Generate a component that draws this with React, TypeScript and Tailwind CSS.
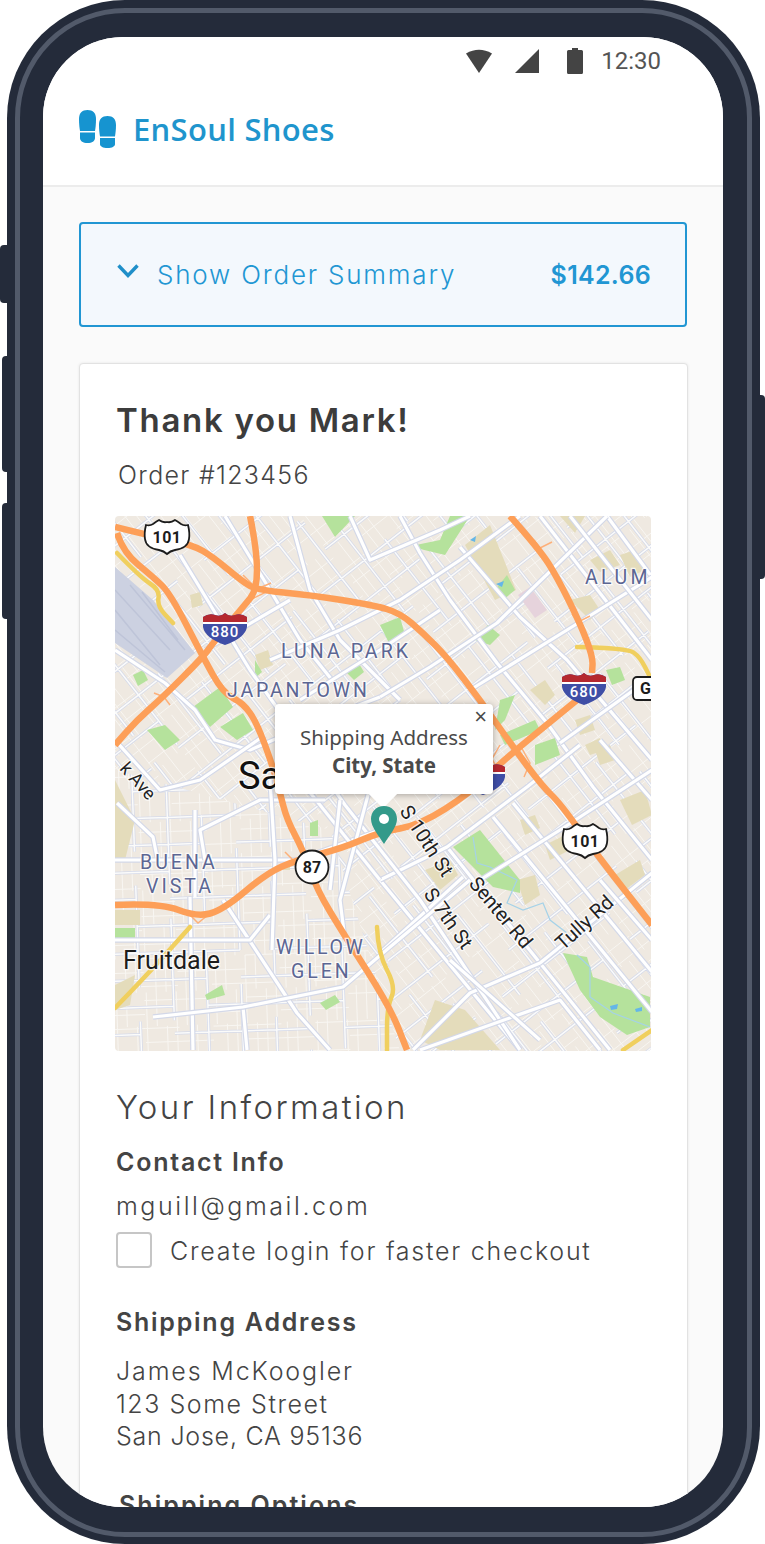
import { Fragment } from "react";

type Pt = [number, number];

const toPath = (pts: Pt[]) => pts.map((p, i) => `${i ? "L" : "M"}${p[0]} ${p[1]}`).join(" ");

// rounds the corners of a road by running through the midpoints
function smooth(pts: Pt[]) {
  let d = `M${pts[0][0]} ${pts[0][1]}`;
  for (let i = 1; i < pts.length - 1; i++) {
    const mx = (pts[i][0] + pts[i + 1][0]) / 2;
    const my = (pts[i][1] + pts[i + 1][1]) / 2;
    d += `Q${pts[i][0]} ${pts[i][1]} ${mx} ${my}`;
  }
  const last = pts[pts.length - 1];
  return `${d}L${last[0]} ${last[1]}`;
}

const orange: Pt[][] = [
  [[115, 527], [147, 535], [193, 545], [213, 557], [243, 582], [257, 590], [310, 595], [373, 605], [400, 613], [423, 633], [447, 657], [480, 700], [513, 747], [543, 787], [560, 803], [597, 855], [652, 925]],
  [[250, 516], [257, 550], [257, 590], [243, 607], [213, 643], [203, 657], [163, 697], [137, 720], [115, 745]],
  [[117, 533], [123, 552], [153, 577], [170, 593], [203, 657], [223, 693], [243, 703], [257, 723], [273, 767], [280, 793], [287, 820], [303, 850], [317, 890], [343, 933], [390, 1007], [407, 1050]],
  [[115, 905], [160, 903], [197, 917], [223, 910], [267, 873], [297, 860], [343, 848], [380, 832], [420, 825], [470, 793], [500, 763], [577, 700]],
  [[510, 516], [540, 550], [557, 577], [580, 623], [593, 657], [592, 673]],
];

// little ramp loops at the interchanges
const ramps = "M243 575l14 14l14 -6M250 600l20 -10M540 548l-6 -8M540 548l12 -6M578 622l-6 -8M578 622l12 -6M164 697l-10 -4M164 697l6 8M190 915l8 8l10 -8M293 860l-8 -8M293 860l8 10M500 745l-8 14l8 14M520 745l10 18l-6 14";

const yellow: Pt[][] = [
  [[577, 647], [627, 648], [640, 657], [650, 677]],
  [[117, 553], [140, 577], [160, 590], [157, 606], [173, 623]],
  [[115, 1008], [147, 975], [190, 927]],
  [[377, 927], [378, 953], [396, 987], [387, 1007], [387, 1050]],
  [[623, 1050], [652, 1030]],
];

const majors: Pt[][] = [
  [[290, 516], [310, 590], [340, 640], [400, 700]],
  [[400, 516], [420, 553], [450, 600], [497, 663], [547, 723], [593, 787], [652, 860]],
  [[460, 547], [520, 617], [567, 660], [652, 760]],
  [[540, 516], [652, 660]],
  [[607, 516], [652, 577]],
  [[447, 847], [540, 963], [610, 1050]],
  [[380, 880], [473, 993], [520, 1050]],
  [[493, 817], [652, 1012]],
  [[513, 803], [652, 972]],
  [[380, 697], [430, 667], [497, 623], [607, 516]],
  [[470, 690], [567, 630], [652, 577]],
  [[560, 743], [652, 677]],
  [[413, 1050], [470, 993], [540, 963], [652, 873]],
  [[380, 880], [447, 847], [527, 787], [580, 745]],
  [[380, 953], [463, 877]],
  [[115, 650], [165, 683], [195, 710], [215, 740], [250, 750], [320, 720], [380, 697]],
  [[180, 555], [250, 670], [300, 740], [345, 805], [420, 900], [520, 1050]],
  [[225, 516], [270, 590], [300, 640], [340, 690]],
  [[115, 860], [297, 860], [380, 830]],
  [[190, 897], [193, 1050]],
  [[243, 1007], [247, 1050]],
  [[223, 900], [297, 1013], [330, 1050]],
  [[153, 1017], [243, 1007], [343, 987], [390, 947], [470, 880]],
  [[117, 803], [153, 837], [157, 857]],
  [[115, 940], [250, 940], [270, 915]],
  [[115, 740], [160, 790], [200, 780], [265, 735]],
  [[300, 780], [380, 880]],
  [[350, 516], [370, 560], [440, 530], [470, 516]],
  [[325, 800], [260, 800], [200, 830], [205, 860]],
  [[380, 750], [340, 900], [345, 940]],
  [[420, 1050], [560, 1000], [600, 1050]],
  [[270, 660], [340, 630], [400, 600], [460, 560], [520, 516]],
  [[300, 700], [380, 650], [440, 610]],
  [[205, 650], [290, 600]],
  [[570, 516], [652, 620]],
  [[600, 740], [652, 800]],
  [[480, 880], [560, 830], [652, 770]],
  [[600, 880], [652, 940]],
  [[270, 780], [275, 860], [272, 950]],
  [[195, 810], [195, 897]],
  [[340, 800], [330, 890]],
  [[450, 960], [540, 1040]],
];

const parks: Pt[][] = [
  [[193, 707], [220, 687], [233, 707], [210, 727]],
  [[220, 727], [243, 713], [253, 730], [237, 740]],
  [[147, 730], [165, 725], [180, 740], [165, 750]],
  [[453, 847], [480, 830], [520, 880], [520, 893], [493, 887]],
  [[563, 953], [587, 957], [593, 977], [650, 997], [650, 1027], [627, 1035], [600, 1017], [580, 990]],
  [[416, 548], [445, 555], [470, 516], [450, 516], [440, 540], [416, 545]],
  [[495, 590], [507, 575], [515, 590], [503, 600]],
  [[322, 516], [355, 516], [335, 537]],
  [[380, 625], [400, 617], [405, 635], [390, 645]],
  [[500, 700], [515, 695], [505, 720], [495, 730]],
  [[500, 735], [535, 720], [540, 730], [505, 745]],
  [[535, 745], [555, 738], [560, 755], [535, 765]],
  [[115, 928], [135, 928], [135, 940], [115, 940]],
  [[205, 995], [222, 985], [225, 995], [207, 1000]],
  [[320, 1003], [335, 995], [340, 1002], [326, 1010]],
  [[255, 660], [262, 672], [255, 678]],
  [[346, 672], [358, 662], [364, 672], [354, 680]],
  [[133, 675], [143, 670], [148, 680], [138, 686]],
  [[310, 823], [318, 820], [318, 836], [310, 836]],
  [[606, 670], [620, 667], [625, 680], [612, 685]],
  [[475, 640], [488, 625], [500, 635], [490, 645]],
];

const tan: Pt[][] = [
  [[465, 545], [490, 525], [516, 590], [495, 600]],
  [[560, 516], [585, 516], [575, 533]],
  [[590, 560], [610, 550], [620, 565], [600, 572]],
  [[620, 555], [635, 550], [645, 570], [630, 577]],
  [[570, 600], [590, 595], [600, 610], [590, 620]],
  [[190, 595], [200, 592], [203, 605], [192, 608]],
  [[255, 655], [268, 650], [273, 665], [260, 670]],
  [[530, 690], [545, 680], [555, 695], [545, 705]],
  [[575, 720], [590, 715], [595, 730], [580, 735]],
  [[595, 750], [610, 745], [615, 760], [600, 765]],
  [[620, 800], [645, 790], [652, 815], [632, 825]],
  [[585, 745], [600, 738], [605, 750], [590, 755]],
  [[425, 870], [450, 860], [458, 875], [440, 890]],
  [[517, 880], [535, 875], [540, 895], [525, 905]],
  [[520, 820], [535, 815], [540, 828], [525, 835]],
  [[545, 845], [565, 835], [570, 850], [550, 860]],
  [[115, 780], [135, 820], [125, 860], [115, 860]],
  [[115, 910], [140, 910], [140, 925], [115, 925]],
  [[115, 985], [135, 975], [130, 1005], [115, 1010]],
  [[615, 875], [640, 860], [645, 875], [625, 890]],
  [[283, 860], [290, 860], [290, 870], [283, 870]],
  [[435, 1000], [465, 1010], [500, 1050], [440, 1050], [420, 1040]],
];

// side streets, generated as broken parallel lines
function family(angle: number, spacing: number, cx: number, cy: number, skip: number) {
  const rad = (angle * Math.PI) / 180;
  const ux = Math.cos(rad);
  const uy = Math.sin(rad);
  const out: string[] = [];
  for (let i = -45; i <= 45; i++) {
    const ox = cx - uy * i * spacing;
    const oy = cy + ux * i * spacing;
    for (let j = -12; j < 12; j++) {
      if ((i * 37 + j * 17 + 500) % skip === 0) continue;
      const a = j * 34;
      const b = a + 34;
      out.push(`M${(ox + ux * a).toFixed(1)} ${(oy + uy * a).toFixed(1)}L${(ox + ux * b).toFixed(1)} ${(oy + uy * b).toFixed(1)}`);
    }
  }
  return out.join("");
}

const streetSets = [
  {
    clip: "url(#regionNorth)",
    medium: family(52, 29, 400, 700, 4) + family(-38, 33, 400, 700, 5),
    fine: family(52, 9.5, 405, 705, 3) + family(-38, 16, 405, 705, 3),
  },
  {
    clip: "url(#regionSouth)",
    medium: family(88, 34, 240, 950, 4) + family(-2, 27, 240, 950, 5),
    fine: family(88, 10, 245, 955, 3) + family(-2, 14, 245, 955, 3),
  },
];

function Interstate({ x, y, label }: { x: number; y: number; label: string }) {
  return (
    <g transform={`translate(${x} ${y})`}>
      <path d="M-22 -11Q-16 -15 -10 -13Q-4 -11 0 -15Q4 -11 10 -13Q16 -15 22 -11L22 -1Q20 10 0 17Q-20 10 -22 -1Z" fill="#3f4ea6" />
      <path d="M-22 -11Q-16 -15 -10 -13Q-4 -11 0 -15Q4 -11 10 -13Q16 -15 22 -11L22 -6L-22 -6Z" fill="#b5282f" />
      <rect x="-22" y="-6" width="44" height="2" fill="#ffffff" />
      <text y="9" textAnchor="middle" fill="#ffffff" className="font-['Roboto',sans-serif] text-[15px] font-medium tracking-[1px]">{label}</text>
    </g>
  );
}

function UsShield({ x, y }: { x: number; y: number }) {
  return (
    <g transform={`translate(${x} ${y})`}>
      <path d="M-21 -12Q-17 -11 -14 -13Q-10 -16 -8 -17Q-4 -14 0 -15Q4 -14 8 -17Q10 -16 14 -13Q17 -11 21 -12Q23 -4 22 2Q21 11 8 13Q3 14 0 17Q-3 14 -8 13Q-21 11 -22 2Q-23 -4 -21 -12Z" fill="#ffffff" stroke="#1c1c1c" strokeWidth="1.8" />
      <text y="6" textAnchor="middle" fill="#1c1c1c" className="font-['Roboto',sans-serif] text-[16px] font-bold tracking-[0.5px]">101</text>
    </g>
  );
}

function MapLabel({ x, y, size, spacing, fill, rotate, children }: { x: number; y: number; size: number; spacing?: number; fill: string; rotate?: number; children: string }) {
  return (
    <text
      x={x}
      y={y}
      fontSize={size}
      letterSpacing={spacing ?? 0}
      fill={fill}
      stroke="#ffffff"
      strokeOpacity={0.75}
      strokeWidth={2.5}
      paintOrder="stroke"
      transform={rotate ? `rotate(${rotate} ${x} ${y})` : undefined}
      className="font-['Roboto',sans-serif]"
    >
      {children}
    </text>
  );
}

function StreetMap() {
  return (
    <svg viewBox="115 516 536 535" className="block h-[535px] w-[536px]">
      <defs>
        <clipPath id="regionNorth">
          <path d="M115 516H651V1051H400L330 830L115 770Z" />
        </clipPath>
        <clipPath id="regionSouth">
          <path d="M115 770L330 830L400 1051H115Z" />
        </clipPath>
      </defs>
      <rect x="115" y="516" width="536" height="535" fill="#efe9e1" />
      {streetSets.map((s) => (
        <g key={s.clip} clipPath={s.clip} fill="none">
          <path d={s.fine} stroke="#f8f6f2" strokeWidth="1" />
          <path d={s.medium} stroke="#d5daea" strokeWidth="3" />
          <path d={s.medium} stroke="#fbfbfa" strokeWidth="1.5" />
        </g>
      ))}
      <path d="M115 567L153 600L195 653L167 678L115 643Z" fill="#ccd1e1" />
      <path d="M115 590L170 650M115 610L160 665M130 585L185 650M142 592L178 640M115 630L165 672" fill="none" stroke="#bec4d8" strokeWidth="1.5" />
      {tan.map((p, i) => <path key={i} d={toPath(p) + "Z"} fill="#e4dcbb" />)}
      <path d="M518 595L530 587L547 610L535 618Z" fill="#e6d3dc" />
      {parks.map((p, i) => <path key={i} d={toPath(p) + "Z"} fill="#b5e29c" />)}
      <path d="M473 837L477 863L490 867L517 880L507 903L523 910L543 903L550 920L567 933M577 955L590 967L590 997L613 1013L650 1027" fill="none" stroke="#a5d2e8" strokeWidth="1.2" />
      <path d="M496 584l8 -3l-2 6z M470 540l6 -4l-1 6z M610 1006l8 -2l-1 5l-6 1z M635 1009l7 -2l0 4l-6 1z" fill="#64b6e8" />
      {majors.map((p, i) => (
        <Fragment key={i}>
          <path d={toPath(p)} fill="none" stroke="#d3d8e8" strokeWidth="5.5" strokeLinejoin="round" />
          <path d={toPath(p)} fill="none" stroke="#ffffff" strokeWidth="3.2" strokeLinejoin="round" />
        </Fragment>
      ))}
      {yellow.map((p, i) => <path key={i} d={smooth(p)} fill="none" stroke="#f0cf5e" strokeWidth="4.5" strokeLinecap="round" />)}
      <path d={ramps} fill="none" stroke="#fdb07a" strokeWidth="1.5" />
      {orange.map((p, i) => <path key={i} d={smooth(p)} fill="none" stroke="#fd9f58" strokeWidth="6.5" />)}

      <MapLabel x={281} y={658} size={19.5} spacing={3.1} fill="#5c6693">LUNA PARK</MapLabel>
      <MapLabel x={227} y={697} size={19.5} spacing={2.9} fill="#5c6693">JAPANTOWN</MapLabel>
      <MapLabel x={585} y={584} size={19.5} spacing={3.4} fill="#5c6693">ALUM</MapLabel>
      <MapLabel x={140} y={869} size={19.5} spacing={3} fill="#5c6693">BUENA</MapLabel>
      <MapLabel x={146} y={893} size={19.5} spacing={3} fill="#5c6693">VISTA</MapLabel>
      <MapLabel x={276} y={954} size={19.5} spacing={2.6} fill="#5c6693">WILLOW</MapLabel>
      <MapLabel x={291} y={978} size={19.5} spacing={3} fill="#5c6693">GLEN</MapLabel>
      <MapLabel x={123} y={969} size={25} fill="#1c1c1c">Fruitdale</MapLabel>
      <MapLabel x={238} y={789} size={38} fill="#111111">Sa</MapLabel>
      <MapLabel x={119} y={769} size={18} fill="#222222" rotate={48}>k Ave</MapLabel>
      <MapLabel x={399} y={811} size={20} fill="#222222" rotate={57}>S 10th St</MapLabel>
      <MapLabel x={423} y={894} size={20} fill="#222222" rotate={55}>S 7th St</MapLabel>
      <MapLabel x={468} y={884} size={20} fill="#222222" rotate={50}>Senter Rd</MapLabel>
      <MapLabel x={563} y={951} size={20} fill="#222222" rotate={-42}>Tully Rd</MapLabel>

      <UsShield x={167} y={537} />
      <UsShield x={585} y={841} />
      <Interstate x={225} y={628} label="880" />
      <Interstate x={584} y={688} label="680" />
      <Interstate x={483} y={778} label="" />
      <circle cx="312" cy="867" r="16.5" fill="#ffffff" stroke="#1c1c1c" strokeWidth="1.8" />
      <text x="312" y="873" textAnchor="middle" fill="#1c1c1c" className="font-['Roboto',sans-serif] text-[16px] font-bold">87</text>
      <rect x="633" y="677" width="24" height="23" rx="4" fill="#ffffff" stroke="#1c1c1c" strokeWidth="1.8" />
      <text x="640" y="694" fill="#1c1c1c" className="font-['Roboto',sans-serif] text-[16px] font-bold">G</text>
    </svg>
  );
}

function SoleLogo() {
  return (
    <svg viewBox="0 0 37 38" className="h-[38px] w-[37px] shrink-0" fill="#1694d0">
      <path d="M0 9C0 3 3 0 8.5 0S17 3 17 9C17 14 16.5 18 16 21H1C.5 18 0 14 0 9Z" />
      <path d="M1 22.5H16V28C16 31 13 33 8.5 33S1 31 1 28Z" />
      <path d="M20 15C20 9 23 6 28.5 6S37 9 37 15C37 20 36.5 23 36 26.5H21C20.5 23 20 20 20 15Z" />
      <path d="M21 28H36V34C36 36.5 33 38 28.5 38S21 36.5 21 34Z" />
    </svg>
  );
}

export default function App() {
  return (
    <div className="relative h-[1544px] w-[765px] overflow-hidden bg-white font-['Inter',sans-serif] text-[#444444]">
      {/* side buttons */}
      <div className="absolute left-0 top-[245px] h-[58px] w-[10px] rounded-l bg-[#242b3a]" />
      <div className="absolute left-[2px] top-[356px] h-[116px] w-[8px] rounded-l bg-[#242b3a]" />
      <div className="absolute left-[2px] top-[503px] h-[116px] w-[8px] rounded-l bg-[#242b3a]" />
      <div className="absolute left-[757px] top-[395px] h-[184px] w-[8px] rounded-r bg-[#242b3a]" />

      <div className="relative ml-[7px] h-[1544px] w-[753px] rounded-[118px] bg-[#242b3a] pb-[7px] pl-[8px] pr-[8px] pt-[8px]">
        <div className="h-[1529px] w-[737px] rounded-[110px] border-[5px] border-[#525a6a] pb-[20px] pl-[23px] pr-[24px] pt-[24px]">
          <div className="h-[1470px] w-[680px] overflow-hidden rounded-[80px] bg-[#fafafa]">
            <header className="h-[150px] border-b-2 border-[#ececec] bg-white">
              <div className="flex h-[48px] items-center justify-end pr-[62px]">
                <svg viewBox="0 0 26 24" className="mr-[23px] h-[24px] w-[26px]" fill="#444444">
                  <path d="M0 4.5Q13 -3 26 4.5L13 24Z" />
                </svg>
                <svg viewBox="0 0 24 24" className="mr-[28px] h-[24px] w-[24px]" fill="#444444">
                  <path d="M24 0V24H0Z" />
                </svg>
                <svg viewBox="0 0 16 26" className="mr-[18px] h-[26px] w-[16px]" fill="#444444">
                  <path d="M5 0H11V2H14.5Q16 2 16 3.5V24.5Q16 26 14.5 26H1.5Q0 26 0 24.5V3.5Q0 2 1.5 2H5Z" />
                </svg>
                <span className="font-['Roboto',sans-serif] text-[24px] leading-none text-[#555555]">12:30</span>
              </div>
              <div className="flex items-center pl-[36px] pt-[25px]">
                <SoleLogo />
                <span className="ml-[17px] font-['Open_Sans',sans-serif] text-[31px] font-semibold leading-[38px] tracking-[0.3px] text-[#1f95cd]">EnSoul Shoes</span>
              </div>
            </header>

            <main className="px-[36px] pt-[35px]">
              <div className="flex h-[105px] w-[608px] items-center rounded border-2 border-[#2196d3] bg-[#f3f8fd] pl-[36px] pr-[34px] text-[#2196d3]">
                <svg viewBox="0 0 22 14" className="mb-[8px] h-[14px] w-[22px]" fill="none" stroke="#1f8fc9" strokeWidth="3.4">
                  <path d="M1.5 1.5L11 11.5L20.5 1.5" />
                </svg>
                <span className="ml-[18px] mt-[1px] text-[26px] font-light leading-[34px] tracking-[1.8px]">Show Order Summary</span>
                <span className="ml-auto mt-[1px] text-[25px] font-semibold leading-[34px] tracking-[0.3px]">$142.66</span>
              </div>

              <section className="mt-[36px] h-[1200px] w-[609px] rounded border border-[#e2e2e2] bg-white px-[36px] pt-[34px] shadow-[0_0_3px_rgba(0,0,0,0.08)]">
                <h1 className="text-[33px] font-semibold leading-[44px] tracking-[1.7px] text-[#3c3c3c]">Thank you Mark!</h1>
                <p className="ml-[2px] mt-[18px] text-[25px] font-light leading-[30px] tracking-[1.3px]">Order #123456</p>

                <div className="relative -ml-[1px] mt-[26px] h-[535px] w-[536px]">
                  <div className="overflow-hidden rounded-sm">
                    <StreetMap />
                  </div>
                  <div className="absolute left-[160px] top-[188px] h-[90px] w-[218px] rounded bg-white pt-[19px] text-center font-['Noto_Sans',sans-serif] text-[20.5px] leading-[28px] text-[#4a4a4a] shadow-[0_1px_6px_rgba(0,0,0,0.3)]">
                    <div>Shipping Address</div>
                    <div className="font-bold">City, State</div>
                    <span className="absolute right-[6px] top-[-3px] font-['Liberation_Sans',sans-serif] text-[22px] font-light leading-[32px]">×</span>
                    <span className="absolute left-[98px] top-[80px] h-[20px] w-[20px] rotate-45 bg-white" />
                  </div>
                  <svg viewBox="0 0 28 38" className="absolute left-[255px] top-[290px] h-[38px] w-[28px]">
                    <path d="M14 0C6 0 1 6 1 13C1 21 9 30 14 38C19 30 27 21 27 13C27 6 22 0 14 0Z" fill="#339a8a" />
                    <circle cx="14" cy="13" r="5" fill="#ffffff" />
                  </svg>
                </div>

                <h2 className="mt-[34px] text-[33px] font-light leading-[44px] tracking-[2.4px]">Your Information</h2>
                <h3 className="mt-[17px] text-[25px] font-semibold leading-[32px] tracking-[1.75px]">Contact Info</h3>
                <p className="mt-[12px] text-[25px] font-light leading-[32px] tracking-[2.56px]">mguill@gmail.com</p>
                <label className="mt-[10px] flex items-center">
                  <span className="h-[36px] w-[36px] rounded border-2 border-[#c6c6c6] bg-white" />
                  <span className="ml-[18px] pt-[2px] text-[25px] font-light leading-[32px] tracking-[1.75px]">Create login for faster checkout</span>
                </label>
                <h3 className="mt-[38px] text-[25px] font-semibold leading-[32px] tracking-[1.75px]">Shipping Address</h3>
                <div className="mt-[17px] text-[25px] font-light leading-[32.5px]">
                  <div className="tracking-[1.87px]">James McKoogler</div>
                  <div className="tracking-[1.53px]">123 Some Street</div>
                  <div className="tracking-[0.78px]">San Jose, CA 95136</div>
                </div>
                <h3 className="ml-[3px] mt-[36px] text-[25px] font-semibold leading-[32px] tracking-[2.05px]">Shipping Options</h3>
              </section>
            </main>
          </div>
        </div>
      </div>
    </div>
  );
}
